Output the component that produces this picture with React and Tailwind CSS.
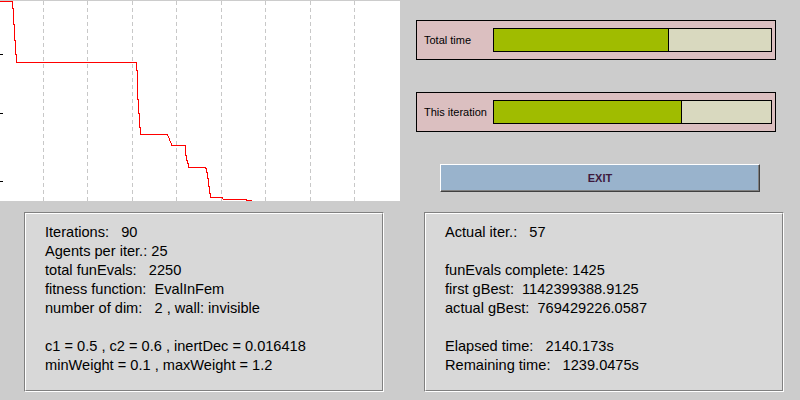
import React from "react";

const gridX = [43.5, 87.5, 132.5, 176.5, 221.5, 265.5, 310.5, 354.5];
const ticksY = [54.5, 113.5, 181.5];

const bestPath =
  "M0 1.5 H12.5 V8 H13.5 V24 H14.5 V40 H15.5 V54 H16.5 V62.5 H136.5 V70 H137.5 V99 H138.5 V113 H139.5 V127 H140.5 V134.5 H167 L168 136 L169 138 L170 141 L171 143 L172 145.5 H185.5 V155 H186.5 V160 H187.5 V163 H188.5 V167.5 H205 L206 168.5 V172 H207.5 V178 H208.5 V186 H209.5 V193 H210.5 V197.5 H222 L223 199 L225 199.5 H246 V200.5 H252";

const leftLines = [
  "Iterations:   90",
  "Agents per iter.: 25",
  "total funEvals:   2250",
  "fitness function:  EvalInFem",
  "number of dim:   2 , wall: invisible",
  "",
  "c1 = 0.5 , c2 = 0.6 , inertDec = 0.016418",
  "minWeight = 0.1 , maxWeight = 1.2",
];

const rightLines = [
  "Actual iter.:   57",
  "",
  "funEvals complete: 1425",
  "first gBest:  1142399388.9125",
  "actual gBest:  769429226.0587",
  "",
  "Elapsed time:   2140.173s",
  "Remaining time:   1239.0475s",
];

function ProgressBox({ label, pct }) {
  return (
    <div className="w-[360px] h-[40px] border border-black bg-[#dbbfc0] flex items-center pl-[7px] pr-[3px]">
      <span className="w-[69px] text-[11px] text-black leading-none">{label}</span>
      <div className="flex-1 h-[24px] border border-black bg-[#d9d9bf] flex">
        <div className="h-full bg-[#a0bc00] border-r border-black" style={{ width: pct + "%" }} />
      </div>
    </div>
  );
}

function InfoPanel({ lines }) {
  return (
    <div className="w-[360px] h-[180px] border border-t-[#808080] border-l-[#808080] border-b-white border-r-white">
      <div className="w-full h-full border border-t-white border-l-white border-b-[#808080] border-r-[#808080] bg-[#d8d8d8] pt-[9px] pl-[19px]">
        {lines.map((l, i) => (
          <div key={i} className="h-[19px] leading-[19px] text-[14.6px] text-black whitespace-pre">
            {l}
          </div>
        ))}
      </div>
    </div>
  );
}

export default function App() {
  return (
    <div
      className="w-[800px] h-[400px] bg-[#cccccc] grid grid-cols-[400px_400px] overflow-hidden"
      style={{ fontFamily: '"Liberation Sans", Arial, sans-serif' }}
    >
      {/* chart + setup */}
      <div className="flex flex-col">
        <svg width="400" height="201" viewBox="0 0 400 201" className="block">
          <rect x="0" y="1" width="400" height="200" fill="#ffffff" />
          {gridX.map((x) => (
            <line key={x} x1={x} y1="1" x2={x} y2="201" stroke="#c8c8c8" strokeDasharray="4 3" shapeRendering="crispEdges" />
          ))}
          {ticksY.map((y) => (
            <line key={y} x1="0" y1={y} x2="3" y2={y} stroke="#000" shapeRendering="crispEdges" />
          ))}
          <path d={bestPath} fill="none" stroke="#ff0000" strokeWidth="1" shapeRendering="crispEdges" />
        </svg>
        <div className="mt-[11px] pl-[24px]">
          <InfoPanel lines={leftLines} />
        </div>
      </div>

      {/* progress + status */}
      <div className="flex flex-col pl-[16px] pt-[20px]">
        <ProgressBox label="Total time" pct={63.2} />
        <div className="mt-[32px]">
          <ProgressBox label="This iteration" pct={67.9} />
        </div>
        <div className="mt-[32px] pl-[24px]">
          <button className="w-[320px] h-[28px] bg-[#99b3cc] border border-t-white border-l-white border-b-[#404040] border-r-[#404040] shadow-[inset_-1px_-1px_0_#808080] text-[11px] font-bold text-[#3d1a3d]">
            EXIT
          </button>
        </div>
        <div className="mt-[20px] pl-[8px]">
          <InfoPanel lines={rightLines} />
        </div>
      </div>
    </div>
  );
}
